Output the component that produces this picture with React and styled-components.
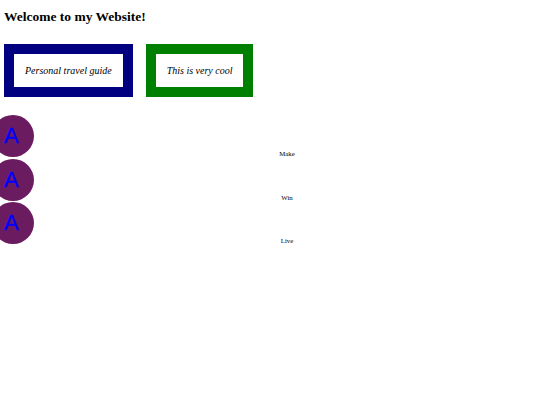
import React from "react";
import styled, { createGlobalStyle } from "styled-components";

const Global = createGlobalStyle`
  html, body { margin: 0; padding: 0; background: #fff; }
  body { font-family: "Liberation Serif", "Times New Roman", serif; color: #000; }
`;

const Page = styled.div`
  padding: 0 0 0 4px;
`;

const Title = styled.h1`
  margin: 0;
  padding-top: 9px;
  font-size: 13.5px;
  line-height: 15px;
  font-weight: bold;
`;

const Cards = styled.div`
  display: flex;
  gap: 13px;
  margin-top: 19.5px;
`;

const Card = styled.div`
  background: ${(p) => p.$color};
  padding: 10.5px 10px 10px;
`;

const CardInner = styled.div`
  background: #fff;
  height: 33px;
  padding: 0 11px;
  display: flex;
  align-items: center;
  justify-content: center;
  font-style: italic;
  font-size: 10px;
`;

const List = styled.div`
  display: flex;
  flex-direction: column;
  gap: 1.5px;
  margin-top: 18px;
  margin-left: -12px;
`;

const Row = styled.div`
  display: flex;
  align-items: flex-end;
`;

const Circle = styled.div`
  width: 42px;
  height: 42px;
  border-radius: 50%;
  background: #6b1b60;
  color: #0000ff;
  font-family: "Liberation Sans", Arial, sans-serif;
  font-size: 22px;
  line-height: 42px;
  padding-left: 12px;
  box-sizing: border-box;
  flex-shrink: 0;
  -webkit-text-stroke: 0.3px #0000ff;
`;

const Label = styled.div`
  flex: 1;
  text-align: center;
  font-size: 6.8px;
  line-height: 8px;
  margin-bottom: -1px;
`;

export default function App() {
  return (
    <>
      <Global />
      <Page>
        <Title>Welcome to my Website!</Title>
        <Cards>
          <Card $color="#000080">
            <CardInner>Personal travel guide</CardInner>
          </Card>
          <Card $color="#008000">
            <CardInner>This is very cool</CardInner>
          </Card>
        </Cards>
        <List>
          {["Make", "Win", "Live"].map((t) => (
            <Row key={t}>
              <Circle>A</Circle>
              <Label>{t}</Label>
            </Row>
          ))}
        </List>
      </Page>
    </>
  );
}
